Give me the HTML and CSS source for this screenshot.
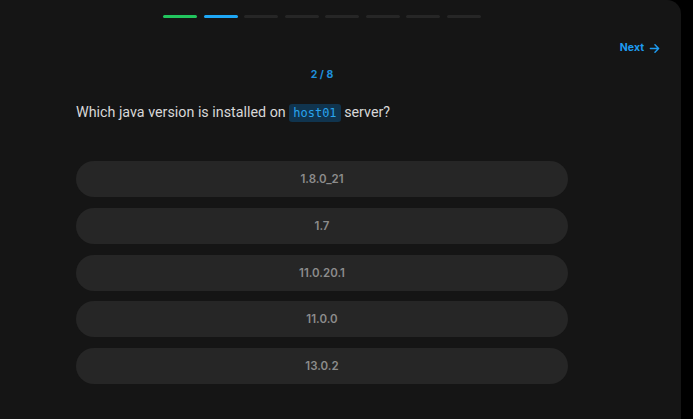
FILE: index.html
```html
<!DOCTYPE html>
<html>
<head>
<meta charset="utf-8">
<link rel="stylesheet" href="styles.css">
</head>
<body>
<div class="card">
  <div class="column">
    <div class="progress">
      <span class="seg done"></span>
      <span class="seg current"></span>
      <span class="seg"></span>
      <span class="seg"></span>
      <span class="seg"></span>
      <span class="seg"></span>
      <span class="seg"></span>
      <span class="seg"></span>
    </div>
  </div>
  <div class="nav">
    <button class="next">Next
      <svg width="11" height="11" viewBox="0 0 12 12" fill="none" stroke="currentColor" stroke-width="1.6" stroke-linecap="round" stroke-linejoin="round"><path d="M1.5 6h9M6.5 2l4 4-4 4"/></svg>
    </button>
  </div>
  <div class="column">
    <div class="counter">2 / 8</div>
    <p class="question">Which java version is installed on <code>host01</code> server?</p>
    <div class="options">
      <button class="option">1.8.0_21</button>
      <button class="option">1.7</button>
      <button class="option">11.0.20.1</button>
      <button class="option">11.0.0</button>
      <button class="option">13.0.2</button>
    </div>
  </div>
</div>
</body>
</html>
```
FILE: styles.css
```css
html, body {
  margin: 0;
  padding: 0;
  background: #000;
  height: 100%;
}
body {
  font-family: Inter, "Noto Sans", sans-serif;
}
.card {
  width: 681px;
  height: 419px;
  background: #151515;
  border-top-right-radius: 14px;
  box-sizing: border-box;
  padding-top: 15px;
}
.column {
  width: 492px;
  margin-left: 76px;
}
.progress {
  display: flex;
  justify-content: center;
  gap: 6.5px;
}
.seg {
  display: block;
  width: 34px;
  height: 3px;
  border-radius: 2px;
  background: #262626;
}
.seg.done { background: #22c55e; }
.seg.current { background: #1ea7f5; }
.nav {
  display: flex;
  justify-content: flex-end;
  padding-right: 21px;
  margin-top: 22px;
}
.next {
  display: flex;
  align-items: center;
  gap: 5px;
  background: none;
  border: 0;
  padding: 0;
  color: #1e9bf0;
  font-family: Inter, sans-serif;
  font-size: 10.5px;
  font-weight: 700;
  line-height: 16px;
}
.counter {
  margin-top: 11px;
  text-align: center;
  color: #1e8fdc;
  font-size: 10.5px;
  font-weight: 700;
  line-height: 16px;
}
.question {
  margin: 19px 0 0;
  color: #d8d8d8;
  font-family: Roboto, Inter, sans-serif;
  font-size: 14.3px;
  line-height: 20px;
}
.question code {
  font-family: "DejaVu Sans Mono", "Liberation Mono", monospace;
  font-size: 12px;
  color: #29a4ee;
  background: #10344e;
  border-radius: 3px;
  padding: 2px 4px;
}
.options {
  margin-top: 38px;
  display: flex;
  flex-direction: column;
  gap: 10.75px;
}
.option {
  height: 36px;
  border: 0;
  border-radius: 18px;
  background: #262626;
  color: #8c8c8c;
  font-family: Inter, sans-serif;
  font-size: 11.5px;
  font-weight: 600;
}
```
